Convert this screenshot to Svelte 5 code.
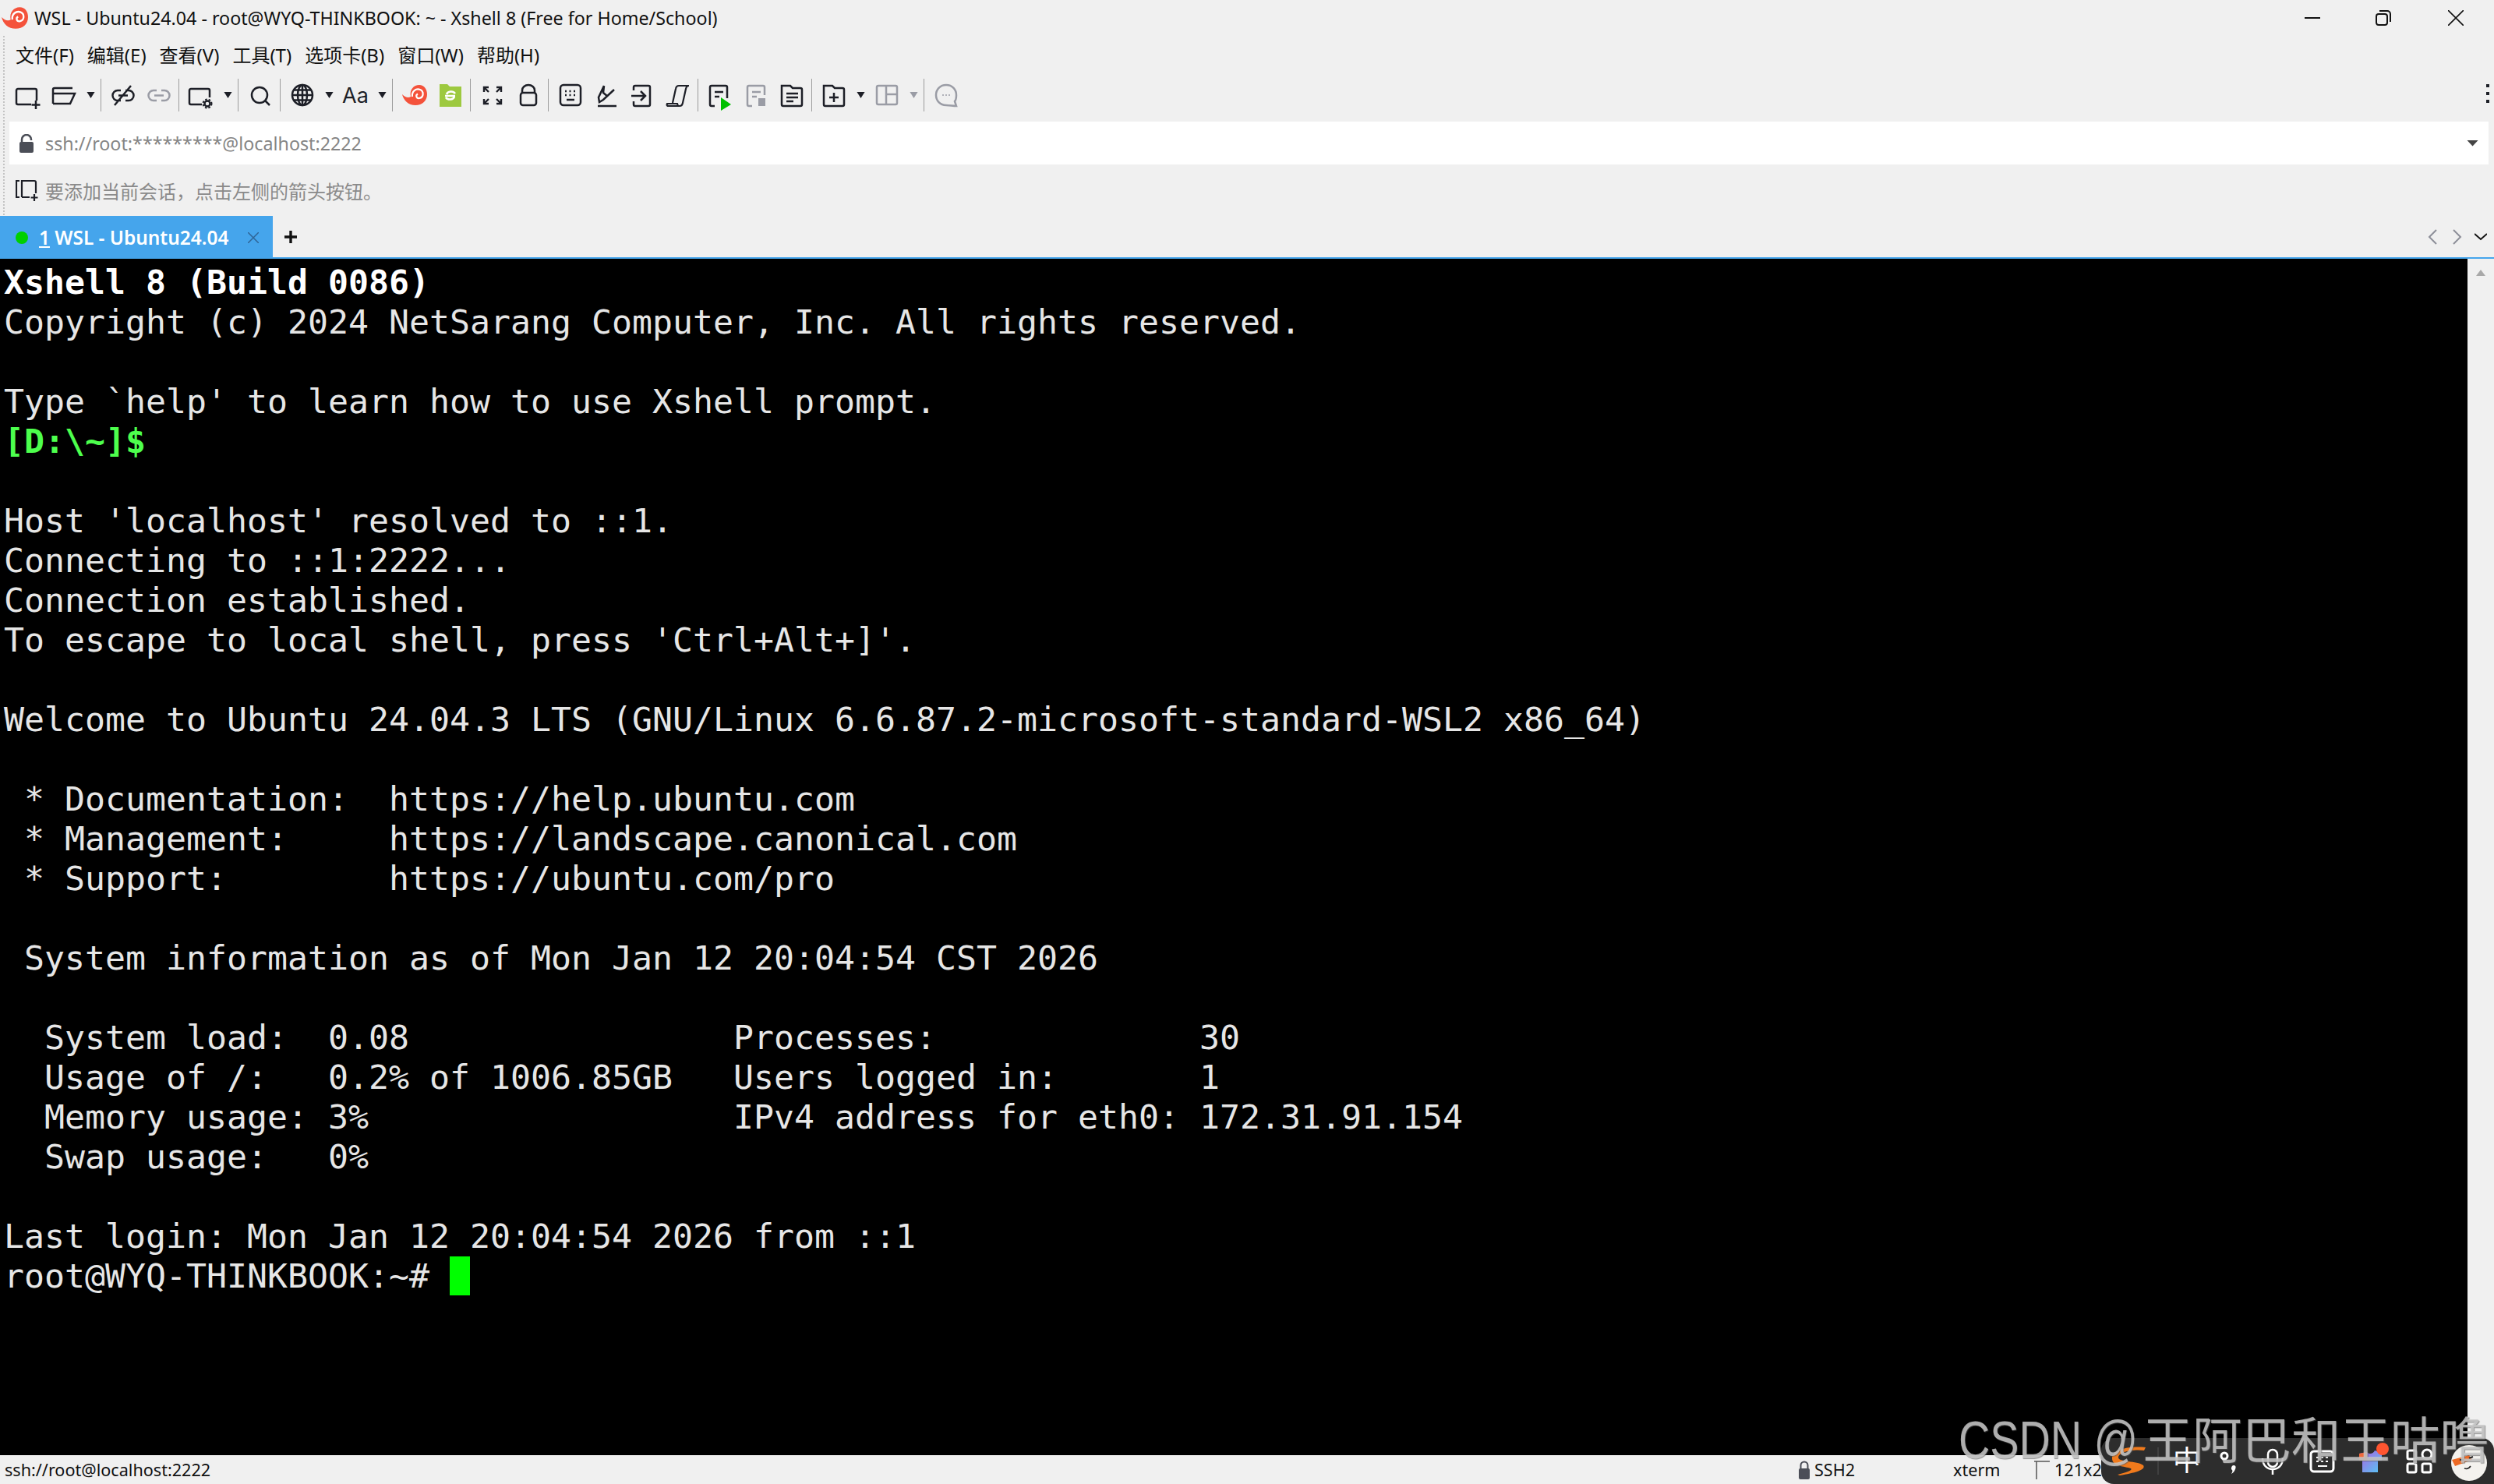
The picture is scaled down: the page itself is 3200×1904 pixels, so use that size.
<script>
  const title = 'WSL - Ubuntu24.04 - root@WYQ-THINKBOOK: ~ - Xshell 8 (Free for Home/School)';
  const menus = ['文件(F)', '编辑(E)', '查看(V)', '工具(T)', '选项卡(B)', '窗口(W)', '帮助(H)'];

  // terminal buffer, kind decides the colour
  const lines = [
    { text: 'Xshell 8 (Build 0086)', kind: 'bold' },
    { text: 'Copyright (c) 2024 NetSarang Computer, Inc. All rights reserved.' },
    { text: '' },
    { text: "Type `help' to learn how to use Xshell prompt." },
    { text: '[D:\\~]$', kind: 'prompt' },
    { text: '' },
    { text: "Host 'localhost' resolved to ::1." },
    { text: 'Connecting to ::1:2222...' },
    { text: 'Connection established.' },
    { text: "To escape to local shell, press 'Ctrl+Alt+]'." },
    { text: '' },
    { text: 'Welcome to Ubuntu 24.04.3 LTS (GNU/Linux 6.6.87.2-microsoft-standard-WSL2 x86_64)' },
    { text: '' },
    { text: ' * Documentation:  https://help.ubuntu.com' },
    { text: ' * Management:     https://landscape.canonical.com' },
    { text: ' * Support:        https://ubuntu.com/pro' },
    { text: '' },
    { text: ' System information as of Mon Jan 12 20:04:54 CST 2026' },
    { text: '' },
    { text: '  System load:  0.08                Processes:             30' },
    { text: '  Usage of /:   0.2% of 1006.85GB   Users logged in:       1' },
    { text: '  Memory usage: 3%                  IPv4 address for eth0: 172.31.91.154' },
    { text: '  Swap usage:   0%' },
    { text: '' },
    { text: 'Last login: Mon Jan 12 20:04:54 2026 from ::1' }
  ];
</script>

<div class="window">
  <div class="chrome">
    <header class="titlebar">
      <svg class="logo" width="34" height="28" viewBox="0 0 32 26">
        <path class="snail" d="M0 12C4 16 8 17 11 15C9 6 15 0 22 0C28 0 32 5 32 12C32 20 26 26 17 26C8 26 2 20 0 12Z" />
        <path class="swirl" d="M13 15C12 8 18 4 23 6C28 8 28 16 22 17C18 17.500 17 13 20 11.500" />
      </svg>
      <span class="title">{title}</span>
      <div class="winbtns">
        <svg width="20" height="20" viewBox="0 0 20 20"><path d="M0 10h20" stroke="#111" stroke-width="2" /></svg>
        <svg width="20" height="20" viewBox="0 0 20 20" fill="none" stroke="#111" stroke-width="2"><rect x="1" y="5" width="14" height="14" rx="3" /><path d="M5 1h10a4 4 0 0 1 4 4v10" /></svg>
        <svg class="closebtn" width="20" height="20" viewBox="0 0 20 20"><path d="M0 0l20 20M20 0L0 20" stroke="#111" stroke-width="1.600" /></svg>
      </div>
    </header>

    <nav class="menubar">
      {#each menus as m}
        <span>{m}</span>
      {/each}
    </nav>

    <div class="toolbar">
      <button aria-label="new"><svg viewBox="0 0 32 32"><path d="M27 23V10a2 2 0 0 0-2-2H3a2 2 0 0 0-2 2v16a2 2 0 0 0 2 2h17" /><path d="M26 23v11M20.500 28.500h11" /></svg></button>
      <button aria-label="open"><svg viewBox="0 0 32 32"><path d="M2 27V9a2 2 0 0 1 2-2h23" /><path d="M2 27h22l6-13H2" /></svg></button>
      <i class="caret"></i>
      <i class="sep"></i>
      <button aria-label="disconnect"><svg viewBox="0 0 32 32"><path d="M13 10H9a6.500 6.500 0 0 0 0 13h4M19 10h4a6.500 6.500 0 0 1 0 13h-4M10 16.500h12M26 4L5 29" /></svg></button>
      <button aria-label="link" class="off"><svg viewBox="0 0 32 32"><path d="M13 10H9a6.500 6.500 0 0 0 0 13h4M19 10h4a6.500 6.500 0 0 1 0 13h-4M10 16.500h12" /></svg></button>
      <i class="sep"></i>
      <button aria-label="properties"><svg viewBox="0 0 32 32"><path d="M27 19V10a2 2 0 0 0-2-2H3a2 2 0 0 0-2 2v16a2 2 0 0 0 2 2h14" /><circle cx="24" cy="27" r="3.500" /><circle cx="24" cy="27" r="5.500" stroke-dasharray="2.500 2" stroke-width="2" /></svg></button>
      <i class="caret"></i>
      <i class="sep"></i>
      <button aria-label="find"><svg viewBox="0 0 32 32"><circle cx="15" cy="16" r="10" /><path d="M22 23l6 6" /></svg></button>
      <i class="sep"></i>
      <button aria-label="web"><svg viewBox="0 0 32 32"><circle cx="16" cy="16" r="13" /><ellipse cx="16" cy="16" rx="6" ry="13" /><path d="M16 3v26M3 16h26M5 9.500h22M5 22.500h22" /></svg></button>
      <i class="caret"></i>
      <button aria-label="font" class="aa">Aa</button>
      <i class="caret"></i>
      <i class="sep"></i>
      <button aria-label="xftp"><svg viewBox="0 0 32 26" class="plain"><path class="snail" d="M0 12C4 16 8 17 11 15C9 6 15 0 22 0C28 0 32 5 32 12C32 20 26 26 17 26C8 26 2 20 0 12Z" /><path class="swirl" d="M13 15C12 8 18 4 23 6C28 8 28 16 22 17C18 17.500 17 13 20 11.500" /></svg></button>
      <button aria-label="xmanager"><svg viewBox="0 0 32 32" class="plain"><path d="M2 2h10l3 3h15v26H2z" fill="#9dc93f" /><path d="M11 15a6 5 0 0 1 11-1M21 18a6 5 0 0 1-11 1M9 17h13" fill="none" stroke="#fff" stroke-width="2.500" /></svg></button>
      <i class="sep"></i>
      <button aria-label="fullscreen"><svg viewBox="0 0 32 32"><path d="M5 12V6h6M5 6l6 6M27 12V6h-6M27 6l-6 6M5 21v6h6M5 27l6-6M27 21v6h-6M27 27l-6-6" stroke-width="2.400" /></svg></button>
      <button aria-label="lock"><svg viewBox="0 0 32 32"><rect x="6" y="13" width="20" height="16" rx="3" /><path d="M8 13v-3a8 7 0 0 1 16 0v3" /></svg></button>
      <i class="sep"></i>
      <button aria-label="keyboard"><svg viewBox="0 0 32 32"><rect x="3" y="3" width="26" height="26" rx="4" /><path d="M9 11h2M14.500 11h2M20 11h2M9 16h2M14.500 16h2M20 16h2M11 22h10" /></svg></button>
      <button aria-label="compose"><svg viewBox="0 0 32 32"><path d="M13 4l-7 15 1 6 5-3 14-13M13 4l-1 9 6 5M5 30h24" /></svg></button>
      <button aria-label="transfer"><svg viewBox="0 0 32 32"><path d="M5 10V6a2 2 0 0 1 2-2h17a2 2 0 0 1 2 2v22a2 2 0 0 1-2 2H7a2 2 0 0 1-2-2v-4" /><path d="M2 17h17M14 11l6 6-6 6" /></svg></button>
      <button aria-label="script"><svg viewBox="0 0 32 32"><path d="M9 26L13 8c.500-3 2-4 4-4h13c-2 0-3.500 1.500-4 4l-4 18c-.500 3-2 4-4 4H4c-2 0-3-1-2-3h13l1 3" stroke-width="2.200" /></svg></button>
      <i class="sep"></i>
      <button aria-label="run"><svg viewBox="0 0 32 32"><path d="M9 30H5a2 2 0 0 1-2-2V6a2 2 0 0 1 2-2h18a2 2 0 0 1 2 2v14M9 12h11M9 18h6" /><path class="fill" d="M17 19v17l13-8z" fill="#00c000" stroke="none" /></svg></button>
      <button aria-label="stop" class="off"><svg viewBox="0 0 32 32"><path d="M11 30H7a2 2 0 0 1-2-2V6a2 2 0 0 1 2-2h18a2 2 0 0 1 2 2v10M11 12h11M11 18h6" /><rect x="19" y="20" width="9" height="10" fill="#9a9ca5" stroke="none" /></svg></button>
      <button aria-label="log"><svg viewBox="0 0 32 32"><path d="M3 28V4h11l3 3h10a2 2 0 0 1 2 2v19a2 2 0 0 1-2 2H5a2 2 0 0 1-2-2zM9 14h15M9 19h15M9 24h9" /></svg></button>
      <i class="sep"></i>
      <button aria-label="add tab"><svg viewBox="0 0 32 32"><path d="M3 28V4h11l3 3h10a2 2 0 0 1 2 2v19a2 2 0 0 1-2 2H5a2 2 0 0 1-2-2zM16 13v12M10 19h12" /></svg></button>
      <i class="caret"></i>
      <button aria-label="layout" class="off"><svg viewBox="0 0 32 32"><rect x="3" y="4" width="26" height="24" rx="2" /><path d="M15 4v24M15 15h14" /></svg></button>
      <i class="caret off"></i>
      <i class="sep"></i>
      <button aria-label="chat" class="off"><svg viewBox="0 0 32 32"><path d="M16 3C8 3 3 9 3 16s5 13 13 13c4 0 9 1 13 1l-2-6c2-2 2-5 2-8 0-7-5-13-13-13z" /><path d="M11 16h2M15 16h2M19 16h2" stroke-width="1.600" /></svg></button>
      <span class="dots"><b></b><b></b><b></b></span>
    </div>

    <div class="address">
      <svg width="18" height="24" viewBox="0 0 18 24"><path d="M3 11V7a6 6 0 0 1 12 0v1" fill="none" stroke="#4b4e57" stroke-width="2.500" /><rect y="10" width="18" height="14" rx="2" fill="#4b4e57" /></svg>
      <span class="url">ssh://root:*********@localhost:2222</span>
      <i class="addr-caret"></i>
    </div>

    <div class="hint">
      <svg width="30" height="28" viewBox="0 0 30 28" fill="none" stroke="#1d1f27" stroke-width="2.200"><path d="M5 2H1v21h4M8 23V2h16a2 2 0 0 1 2 2v14M8 23h10M24 19v9M19.500 23.500h9" /></svg>
      <span>要添加当前会话，点击左侧的箭头按钮。</span>
    </div>

    <div class="tabs">
      <div class="tab">
        <i class="led"></i>
        <span class="tabname"><u>1</u> WSL - Ubuntu24.04</span>
        <svg width="14" height="14" viewBox="0 0 14 14"><path d="M0 0l14 14M14 0L0 14" stroke="#2f6596" stroke-width="1.500" /></svg>
      </div>
      <svg class="plus" width="16" height="16" viewBox="0 0 16 16"><path d="M8 0v16M0 8h16" stroke="#111" stroke-width="3.400" /></svg>
      <div class="tabnav">
        <svg width="14" height="20" viewBox="0 0 14 20" fill="none" stroke="#8d8f99" stroke-width="2"><path d="M11 1L2 10l9 9" /></svg>
        <svg width="14" height="20" viewBox="0 0 14 20" fill="none" stroke="#8d8f99" stroke-width="2"><path d="M3 1l9 9-9 9" /></svg>
        <svg width="16" height="10" viewBox="0 0 16 10" fill="none" stroke="#111" stroke-width="2"><path d="M0 1l8 7 8-7" /></svg>
      </div>
    </div>
  </div>

  <main class="body">
    <div class="term">
      {#each lines as l}
        <div class="line {l.kind ?? ''}">{l.text}</div>
      {/each}
      <div class="line">root@WYQ-THINKBOOK:~# <span class="cursor"></span></div>
    </div>
    <div class="scroll"><i></i></div>
  </main>

  <footer class="status">
    <span class="conn">ssh://root@localhost:2222</span>
    <span class="ssh">
      <svg width="14" height="24" viewBox="0 0 14 24"><path d="M2.500 11V6a4.500 4.500 0 0 1 9 0v5" fill="none" stroke="#4b4e57" stroke-width="2" /><rect y="10" width="14" height="14" rx="2" fill="#4b4e57" /></svg>
      SSH2
    </span>
    <span class="xterm">xterm</span>
    <span class="size">
      <svg width="22" height="24" viewBox="0 0 22 24" fill="none" stroke="#555" stroke-width="1.500"><path d="M3 24V1M0 1h20" /></svg>
      121x29
    </span>
  </footer>

  <svg class="ime" width="504" height="59" viewBox="0 0 504 59">
    <path d="M16 0H488a16 16 0 0 1 16 16V59H16A16 16 0 0 1 0 43V16A16 16 0 0 1 16 0z" fill="#2d2d2d" />
    <path d="M55 16C40 14 22 18 22 25c0 6 24 4 32 10 4 6-12 10-30 13l-3-1c10-3 20-5 17-8-8-3-24-2-24-13C14 14 38 10 57 12z" fill="#f07a1c" />
    <path d="M73 12v35" stroke="#555" stroke-width="1" />
    <text x="110" y="42" class="ime-zh">中</text>
    <circle cx="158" cy="23" r="4" fill="none" stroke="#fff" stroke-width="3" />
    <path d="M170 35c3 0 3 3 2 5-1 3-3 5-5 6 1-2 2-4 1-5-2-1-1-6 2-6z" fill="#fff" />
    <g fill="none" stroke="#fff" stroke-width="2.500">
      <rect x="214" y="15" width="12" height="22" rx="6" />
      <path d="M207 26c0 9 6 14 13 14s13-5 13-14M220 40v7" />
      <rect x="269" y="17" width="29" height="26" rx="4" stroke-width="3" />
      <path d="M276 25h3M282 25h3M288 25h3M276 30h3M282 30h3M288 30h3M278 36h12" stroke-width="2" />
      <rect x="393" y="16" width="11" height="11" rx="2" stroke-width="3" />
      <circle cx="418" cy="21" r="6" stroke-width="3" />
      <rect x="393" y="33" width="11" height="11" rx="2" stroke-width="3" />
      <rect x="412" y="33" width="11" height="11" rx="2" stroke-width="3" />
    </g>
    <defs>
      <linearGradient id="shirt" x1="0" y1="0" x2="1" y2="1">
        <stop offset="0" stop-color="#b05ce0" />
        <stop offset="1" stop-color="#55c8f5" />
      </linearGradient>
    </defs>
    <path d="M331 20l10-2c2 3 8 3 10-2l9 3v10l-5 0v15h-20V29h-4z" fill="url(#shirt)" />
    <path d="M331 20l10-2v11h-10z" fill="#f06a3c" />
    <circle cx="361" cy="14" r="8" fill="#ff5530" />
    <circle cx="472" cy="32" r="23" fill="#f4f2ee" />
    <path d="M450 28l22-6 4 6-22 8z" fill="#ee6a24" />
    <path d="M460 28h5M472 26l5-2" stroke="#222" stroke-width="2" />
    <path d="M466 39c3 1 6 0 8-3" stroke="#222" stroke-width="1.500" fill="none" />
  </svg>

  <div class="mark"><span class="mark-en">CSDN @</span><span class="mark-zh">王阿巴和王咕噜</span></div>
</div>

<style>
  :global(body) {
    margin: 0;
    background: #f0f0f0;
  }

  .window {
    position: relative;
    width: 3200px;
    height: 1904px;
    display: flex;
    flex-direction: column;
    overflow: hidden;
    background: #f0f0f0;
    font-family: "Noto Sans", "Noto Sans CJK SC", sans-serif;
    font-size: 24px;
    color: #111;
  }

  .chrome {
    position: relative;
    flex: none;
  }

  /* dotted grip on the left of the docked bars */
  .chrome::before {
    content: "";
    position: absolute;
    left: 4px;
    top: 46px;
    height: 230px;
    border-left: 2px dotted #c4c4c4;
  }

  .titlebar {
    height: 46px;
    display: flex;
    align-items: center;
    padding-left: 2px;
  }

  .logo {
    margin-right: 8px;
    flex: none;
  }

  .snail {
    fill: #f4523b;
  }

  .swirl {
    fill: none;
    stroke: #fff;
    stroke-width: 2.200;
  }

  .title {
    white-space: nowrap;
    font-size: 23.250px;
  }

  .winbtns {
    margin-left: auto;
    display: flex;
    gap: 71px;
    padding-right: 39px;
  }

  .closebtn {
    margin-left: 2px;
  }

  .menubar {
    height: 48px;
    box-sizing: border-box;
    padding: 0 0 2px 20px;
    display: flex;
    align-items: center;
    gap: 17px;
    font-size: 24px;
  }

  .toolbar {
    height: 44px;
    margin-top: 6px;
    display: flex;
    align-items: center;
    padding-left: 13px;
  }

  .toolbar button {
    width: 46px;
    height: 44px;
    padding: 0;
    border: 0;
    background: none;
    display: flex;
    align-items: center;
    justify-content: center;
    flex: none;
    color: #1d1f27;
    font: inherit;
  }

  .toolbar svg {
    width: 32px;
    height: 32px;
    overflow: visible;
    fill: none;
    stroke: #1d1f27;
    stroke-width: 2.500;
  }

  .toolbar svg.plain {
    stroke: none;
  }

  .toolbar .off svg {
    stroke: #9a9ca5;
  }

  .toolbar .aa {
    font-size: 27px;
    font-family: Inter, "Noto Sans", sans-serif;
  }

  .caret {
    display: block;
    flex: none;
    width: 21px;
    margin-left: 1px;
    height: 8px;
    background: #1d1f27;
    clip-path: polygon(26% 0, 74% 0, 50% 100%);
  }

  .caret.off {
    background: #9a9ca5;
  }

  .sep {
    display: block;
    flex: none;
    width: 1px;
    height: 42px;
    margin: 0 5px 0 2px;
    background: #9c9c9c;
  }

  .dots {
    margin-left: auto;
    margin-right: 6px;
    display: flex;
    flex-direction: column;
    gap: 6px;
    margin-top: -4px;
  }

  .dots b {
    display: block;
    width: 4px;
    height: 4px;
    background: #1d1f27;
  }

  .address {
    height: 55px;
    margin: 12px 7px 0 12px;
    padding: 0 13px;
    display: flex;
    align-items: center;
    background: #fff;
  }

  .url {
    margin-left: 15px;
    color: #858585;
    font-size: 23.250px;
  }

  .addr-caret {
    margin-left: auto;
    width: 15px;
    height: 8px;
    background: #444;
    clip-path: polygon(0 0, 100% 0, 50% 100%);
  }

  .hint {
    height: 66px;
    display: flex;
    align-items: center;
    padding-left: 20px;
    gap: 8px;
    color: #8a8a8a;
    font-size: 24px;
  }

  .tabs {
    height: 55px;
    display: flex;
    box-sizing: border-box;
    border-bottom: 2px solid #45a5ec;
    align-items: center;
  }

  .tab {
    width: 350px;
    height: 55px;
    display: flex;
    align-items: center;
    background: #45a5ec;
    color: #fff;
    box-sizing: border-box;
    padding-left: 20px;
    margin-bottom: -2px;
  }

  .led {
    width: 16px;
    height: 16px;
    border-radius: 50%;
    background: #00d000;
    flex: none;
  }

  .tabname {
    margin-left: 14px;
    width: 268px;
    font-size: 24.400px;
    font-weight: 600;
    white-space: nowrap;
  }

  .plus {
    margin-left: 15px;
  }

  .tabnav {
    margin-left: auto;
    display: flex;
    align-items: center;
    gap: 16px;
    padding-right: 9px;
  }

  .body {
    flex: 1;
    min-height: 0;
    display: flex;
  }

  .term {
    flex: 1;
    background: #000;
    color: #e6e6e6;
    padding: 5px 0 0 5px;
    font-family: "DejaVu Sans Mono", monospace;
    font-size: 43.200px;
    line-height: 51px;
    overflow: hidden;
  }

  .line {
    height: 51px;
    white-space: pre;
  }

  .bold {
    color: #fff;
    font-weight: 700;
  }

  .prompt {
    color: #4dff4d;
    font-weight: 700;
  }

  .cursor {
    display: inline-block;
    width: 26px;
    height: 50px;
    vertical-align: top;
    background: #00ff00;
  }

  .scroll {
    width: 34px;
    flex: none;
    display: flex;
    justify-content: center;
    padding-top: 14px;
    box-sizing: border-box;
  }

  .scroll i {
    width: 12px;
    height: 8px;
    background: #a8a8a8;
    clip-path: polygon(50% 0, 100% 100%, 0 100%);
  }

  .status {
    height: 37px;
    flex: none;
    display: flex;
    align-items: center;
    font-size: 21.600px;
    padding-left: 6px;
    position: relative;
  }

  .conn {
    width: 2302px;
  }

  .ssh {
    width: 198px;
    display: flex;
    align-items: center;
    gap: 6px;
  }

  .xterm {
    width: 104px;
  }

  .size {
    display: flex;
    align-items: center;
    gap: 4px;
  }

  /* IME bar and watermark were captured on top of the app */
  .ime {
    position: absolute;
    left: 2696px;
    top: 1845px;
  }

  .ime-zh {
    font-size: 36px;
    fill: #fff;
    text-anchor: middle;
    font-family: "Noto Sans CJK SC", sans-serif;
  }

  .mark {
    position: absolute;
    left: 2513px;
    top: 1803px;
    white-space: nowrap;
    line-height: 80px;
    color: rgba(205, 205, 205, 0.8);
    text-shadow: 1px 1px 1px rgba(90, 90, 90, 0.6);
  }

  .mark-en {
    display: inline-block;
    font-family: "Liberation Sans", sans-serif;
    font-size: 68px;
    transform: scaleX(0.82);
    transform-origin: left;
    margin-right: -50px;
  }

  .mark-zh {
    font-family: "Noto Sans CJK SC", sans-serif;
    font-size: 63.500px;
    margin-left: 6px;
  }
</style>
